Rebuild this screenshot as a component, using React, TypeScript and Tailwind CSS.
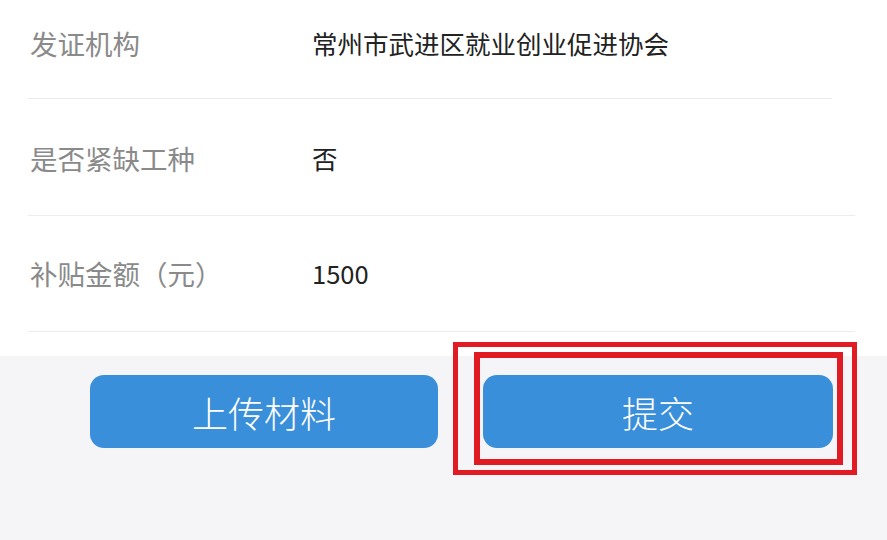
import React from "react";

const font = { fontFamily: '"Noto Sans CJK SC", "Noto Sans", sans-serif' };

function Row({
  label,
  value,
  pad,
  lineW,
}: {
  label: string;
  value: string;
  pad: string;
  lineW: string;
}) {
  return (
    <div className={`${pad} ${lineW} border-b border-[#ececec] flex items-center`}>
      <div className="w-[284px] pl-[2px] text-[27.5px] leading-[36px] text-[#8a8a8a]">{label}</div>
      <div className="text-[25.5px] leading-[36px] text-[#222222]">{value}</div>
    </div>
  );
}

export default function App() {
  return (
    <div className="relative w-[887px] h-[540px] overflow-hidden bg-[#f5f5f7]" style={font}>
      <div className="bg-white h-[356px] pl-[28px]">
        <Row label="发证机构" value="常州市武进区就业创业促进协会" pad="pt-[25px] pb-[37px]" lineW="w-[804px]" />
        <Row label="是否紧缺工种" value="否" pad="pt-[41px] pb-[39px]" lineW="w-[827px]" />
        <Row label="补贴金额（元）" value="1500" pad="pt-[39px] pb-[40px]" lineW="w-[827px]" />
      </div>
      <div className="flex pl-[90px] pt-[19px] gap-[45px]">
        <button className="w-[348px] h-[73px] rounded-[14px] bg-[#3a8fda] text-white text-[36px] font-light leading-none flex items-center justify-center">
          上传材料
        </button>
        <button className="w-[350px] h-[73px] rounded-[14px] bg-[#3a8fda] text-white text-[36px] font-light leading-none flex items-center justify-center">
          提交
        </button>
      </div>
      <div className="absolute left-[453px] top-[342px] w-[404px] h-[133px] border-[5px] border-[#e01b24]" />
      <div className="absolute left-[474px] top-[352px] w-[369px] h-[113px] border-[6px] border-[#e01b24]" />
    </div>
  );
}
